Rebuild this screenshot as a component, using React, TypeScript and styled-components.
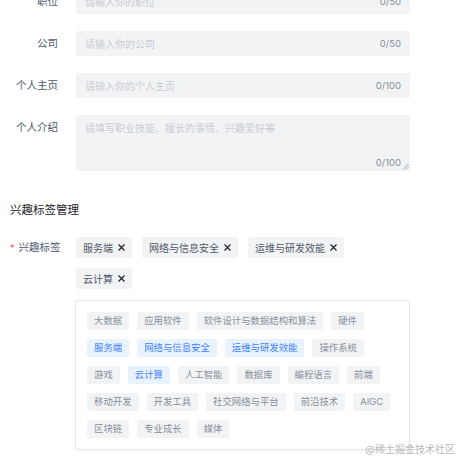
import styled, { createGlobalStyle } from "styled-components";

const GlobalStyle = createGlobalStyle`
  body {
    margin: 0;
    background: #fff;
    font-family: Inter, "Noto Sans CJK SC", sans-serif;
  }
`;

const Screen = styled.div`
  position: relative;
  height: 460px;
  overflow: hidden;
`;

const Page = styled.div`
  margin-top: -11px;
  padding: 0 50px 0 10px;
`;

const FormRow = styled.div<{ gap?: number }>`
  display: grid;
  grid-template-columns: 48px 1fr;
  column-gap: 18px;
  align-items: start;
  margin-bottom: ${(props) => props.gap ?? 17}px;
`;

const Label = styled.label<{ lh?: number }>`
  text-align: right;
  font-size: 10.5px;
  line-height: ${(props) => props.lh ?? 25}px;
  color: #4e5969;
  white-space: nowrap;
`;

const Star = styled.span`
  color: #f53f3f;
  font-size: 9px;
  margin-right: 4px;
`;

const InputBox = styled.div`
  height: 25px;
  background: #f2f3f5;
  border-radius: 2px;
  padding: 0 9px;
  display: flex;
  align-items: center;
  justify-content: space-between;
`;

const TextAreaBox = styled.div`
  position: relative;
  height: 56px;
  box-sizing: border-box;
  background: #f2f3f5;
  border-radius: 2px;
  padding: 6px 9px 1px;
  display: flex;
  flex-direction: column;
  justify-content: space-between;
  align-items: flex-start;
`;

const Placeholder = styled.span`
  color: #c9cdd4;
  font-size: 10px;
  line-height: 14px;
`;

const Counter = styled.span<{ end?: boolean }>`
  color: #86909c;
  font-size: 9.5px;
  line-height: 14px;
  align-self: ${(props) => (props.end ? "flex-end" : "center")};
`;

const Resize = styled.svg`
  position: absolute;
  right: 1px;
  bottom: 1px;
`;

const SectionTitle = styled.div`
  margin: 31px 0 19px;
  font-size: 11.5px;
  line-height: 16px;
  color: #1d2129;
`;

const TagsField = styled.div`
  display: flex;
  flex-direction: column;
`;

const SelectedList = styled.div`
  display: flex;
  flex-wrap: wrap;
  gap: 10px;
  max-width: 300px;
`;

const SelectedTag = styled.span`
  display: inline-flex;
  align-items: center;
  gap: 5px;
  height: 21px;
  padding: 0 7px;
  background: #f2f3f5;
  border-radius: 2px;
  color: #4e5969;
  font-size: 10px;
`;

const Panel = styled.div`
  margin: 11px 0 0 -1px;
  border: 1px solid #e5e6eb;
  border-radius: 3px;
  box-shadow: 0 1px 3px rgba(0, 0, 0, 0.04);
  padding: 11px;
  display: flex;
  flex-wrap: wrap;
  gap: 9px 8px;
`;

const Option = styled.span<{ active?: boolean }>`
  height: 18px;
  line-height: 18px;
  padding: 0 7px;
  border-radius: 2px;
  font-size: 9.4px;
  background: ${(props) => (props.active ? "#e8f3ff" : "#f2f3f5")};
  color: ${(props) => (props.active ? "#4080ff" : "#86909c")};
  white-space: nowrap;
`;

const Watermark = styled.div`
  position: absolute;
  right: 5px;
  bottom: 4px;
  font-size: 10px;
  color: #b9b9b9;
`;

const inputs = [
  { label: "职位", placeholder: "请输入你的职位", max: 50 },
  { label: "公司", placeholder: "请输入你的公司", max: 50 },
  { label: "个人主页", placeholder: "请输入你的个人主页", max: 100 },
];

const selected = ["服务端", "网络与信息安全", "运维与研发效能", "云计算"];

const options = [
  "大数据",
  "应用软件",
  "软件设计与数据结构和算法",
  "硬件",
  "服务端",
  "网络与信息安全",
  "运维与研发效能",
  "操作系统",
  "游戏",
  "云计算",
  "人工智能",
  "数据库",
  "编程语言",
  "前端",
  "移动开发",
  "开发工具",
  "社交网络与平台",
  "前沿技术",
  "AIGC",
  "区块链",
  "专业成长",
  "媒体",
];

function CloseIcon() {
  return (
    <svg width="7" height="7" viewBox="0 0 7 7">
      <path d="M0.5 0.5 L6.5 6.5 M6.5 0.5 L0.5 6.5" stroke="#1d2129" strokeWidth="1.2" />
    </svg>
  );
}

export default function App() {
  return (
    <Screen>
      <GlobalStyle />
      <Page>
        {inputs.map((item) => (
          <FormRow key={item.label}>
            <Label>{item.label}</Label>
            <InputBox>
              <Placeholder>{item.placeholder}</Placeholder>
              <Counter>0/{item.max}</Counter>
            </InputBox>
          </FormRow>
        ))}
        <FormRow gap={0}>
          <Label>个人介绍</Label>
          <TextAreaBox>
            <Placeholder>请填写职业技能、擅长的事情、兴趣爱好等</Placeholder>
            <Counter end>0/100</Counter>
            <Resize width="7" height="7" viewBox="0 0 7 7">
              <path d="M6.5 1 L1 6.5 M6.5 4 L4 6.5" stroke="#86909c" strokeWidth="0.8" />
            </Resize>
          </TextAreaBox>
        </FormRow>

        <SectionTitle>兴趣标签管理</SectionTitle>

        <FormRow gap={0}>
          <Label lh={21}>
            <Star>*</Star>兴趣标签
          </Label>
          <TagsField>
            <SelectedList>
              {selected.map((tag) => (
                <SelectedTag key={tag}>
                  {tag}
                  <CloseIcon />
                </SelectedTag>
              ))}
            </SelectedList>
            <Panel>
              {options.map((tag) => (
                <Option key={tag} active={selected.includes(tag)}>
                  {tag}
                </Option>
              ))}
            </Panel>
          </TagsField>
        </FormRow>
      </Page>
      <Watermark>@稀土掘金技术社区</Watermark>
    </Screen>
  );
}
